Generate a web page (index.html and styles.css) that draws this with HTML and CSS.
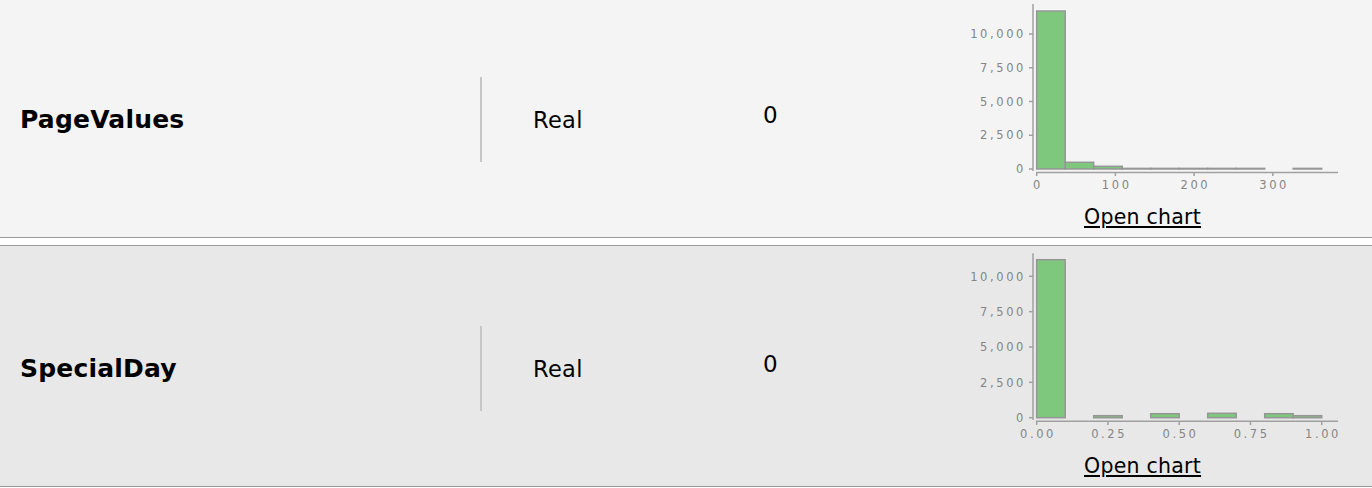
FILE: index.html
```html
<!DOCTYPE html>
<html>
<head>
<meta charset="utf-8">
<link rel="stylesheet" href="styles.css">
</head>
<body>
<div class="table">
  <div class="row row-a">
    <div class="cell name">PageValues</div>
    <div class="divider"></div>
    <div class="cell type">Real</div>
    <div class="cell missing">0</div>
    <div class="cell chart">
      <svg class="hist" width="350" height="200" viewBox="0 0 350 200">
        <g class="bars">
          <rect x="36.7" y="14" width="28.5" height="158"/>
          <rect x="65.2" y="165.3" width="28.5" height="6.7"/>
          <rect x="93.7" y="169.3" width="28.5" height="2.7"/>
          <rect x="122.2" y="171.4" width="28.5" height="0.6"/>
          <rect x="150.7" y="171.4" width="28.5" height="0.6"/>
          <rect x="179.2" y="171.4" width="28.5" height="0.6"/>
          <rect x="207.7" y="171.4" width="28.5" height="0.6"/>
          <rect x="236.2" y="171.4" width="28.5" height="0.6"/>
          <rect x="293.2" y="171.4" width="28.5" height="0.6"/>
        </g>
        <g class="axis">
          <line x1="33" y1="7" x2="33" y2="174"/>
          <line x1="29" y1="172" x2="33" y2="172"/>
          <line x1="29" y1="138.25" x2="33" y2="138.25"/>
          <line x1="29" y1="104.5" x2="33" y2="104.5"/>
          <line x1="29" y1="70.75" x2="33" y2="70.75"/>
          <line x1="29" y1="37" x2="33" y2="37"/>
          <line x1="36" y1="175.5" x2="338" y2="175.5"/>
          <line x1="36.7" y1="175.5" x2="36.7" y2="179"/>
          <line x1="115.4" y1="175.5" x2="115.4" y2="179"/>
          <line x1="194.1" y1="175.5" x2="194.1" y2="179"/>
          <line x1="272.8" y1="175.5" x2="272.8" y2="179"/>
        </g>
        <g class="ylab">
          <text x="26" y="176.2">0</text>
          <text x="26" y="142.4">2,500</text>
          <text x="26" y="108.7">5,000</text>
          <text x="26" y="74.9">7,500</text>
          <text x="26" y="41.2">10,000</text>
        </g>
        <g class="xlab">
          <text x="38" y="191.5">0</text>
          <text x="116.7" y="191.5">100</text>
          <text x="195.4" y="191.5">200</text>
          <text x="274.1" y="191.5">300</text>
        </g>
      </svg>
      <a class="open" href="#">Open chart</a>
    </div>
  </div>
  <div class="gap"></div>
  <div class="row row-b">
    <div class="cell name">SpecialDay</div>
    <div class="divider"></div>
    <div class="cell type">Real</div>
    <div class="cell missing">0</div>
    <div class="cell chart">
      <svg class="hist" width="350" height="200" viewBox="0 0 350 200">
        <g class="bars">
          <rect x="36.7" y="13.7" width="28.5" height="158"/>
          <rect x="93.7" y="169.7" width="28.5" height="2"/>
          <rect x="150.7" y="167.7" width="28.5" height="4"/>
          <rect x="207.7" y="167.3" width="28.5" height="4.4"/>
          <rect x="264.7" y="167.7" width="28.5" height="4"/>
          <rect x="293.2" y="169.7" width="28.5" height="2"/>
        </g>
        <g class="axis">
          <line x1="33" y1="7.3" x2="33" y2="174"/>
          <line x1="29" y1="171.7" x2="33" y2="171.7"/>
          <line x1="29" y1="136.35" x2="33" y2="136.35"/>
          <line x1="29" y1="101" x2="33" y2="101"/>
          <line x1="29" y1="65.65" x2="33" y2="65.65"/>
          <line x1="29" y1="30.3" x2="33" y2="30.3"/>
          <line x1="36" y1="175.3" x2="338" y2="175.3"/>
          <line x1="36.7" y1="175.3" x2="36.7" y2="179"/>
          <line x1="107.95" y1="175.3" x2="107.95" y2="179"/>
          <line x1="179.2" y1="175.3" x2="179.2" y2="179"/>
          <line x1="250.45" y1="175.3" x2="250.45" y2="179"/>
          <line x1="321.7" y1="175.3" x2="321.7" y2="179"/>
        </g>
        <g class="ylab">
          <text x="26" y="175.9">0</text>
          <text x="26" y="140.5">2,500</text>
          <text x="26" y="105.2">5,000</text>
          <text x="26" y="69.8">7,500</text>
          <text x="26" y="34.5">10,000</text>
        </g>
        <g class="xlab">
          <text x="38" y="191.5">0.00</text>
          <text x="109.2" y="191.5">0.25</text>
          <text x="180.5" y="191.5">0.50</text>
          <text x="251.7" y="191.5">0.75</text>
          <text x="323" y="191.5">1.00</text>
        </g>
      </svg>
      <a class="open" href="#">Open chart</a>
    </div>
  </div>
</div>
</body>
</html>
```

FILE: styles.css
```css
html, body {
  margin: 0;
  padding: 0;
  background: #ffffff;
}

body {
  font-family: "DejaVu Sans", "Liberation Sans", sans-serif;
  color: #000000;
  overflow: hidden;
}

.table {
  margin-top: -4px;
}

.row {
  display: flex;
  align-items: center;
  height: 240px;
  border-top: 1px solid #9a9a9a;
  border-bottom: 1px solid #9a9a9a;
}

.row-a {
  background: #f4f4f4;
}

.row-b {
  background: #e8e8e8;
}

.gap {
  height: 7px;
  background: #ffffff;
}

.cell {
  box-sizing: border-box;
}

.name {
  width: 480px;
  padding-left: 20px;
  padding-top: 5px;
  font-size: 25px;
  font-weight: bold;
  letter-spacing: 0.2px;
}

.divider {
  width: 2px;
  height: 85px;
  margin-top: 4px;
  background: #c6c6c6;
}

.type {
  width: 281px;
  padding-left: 51px;
  padding-top: 5px;
  font-size: 22.5px;
  letter-spacing: 0.3px;
}

.missing {
  width: 237px;
  padding-bottom: 5px;
  font-size: 23px;
}

.chart {
  width: 350px;
  align-self: flex-start;
  display: flex;
  flex-direction: column;
}

.hist {
  display: block;
  overflow: visible;
}

.bars rect {
  fill: #7ec87e;
  stroke: #969696;
  stroke-width: 1.5;
}

.axis line {
  stroke: #a0a0a0;
  stroke-width: 1.5;
}

.ylab text,
.xlab text {
  font-family: "DejaVu Sans", sans-serif;
  font-size: 11.5px;
  letter-spacing: 2.6px;
  fill: #858585;
}

.ylab text {
  text-anchor: end;
}

.xlab text {
  text-anchor: middle;
}

.open {
  display: block;
  align-self: flex-start;
  margin-left: 84px;
  margin-top: 8px;
  font-size: 20.5px;
  line-height: 24px;
  letter-spacing: 0.25px;
  color: #000000;
  text-decoration: underline;
}
```
